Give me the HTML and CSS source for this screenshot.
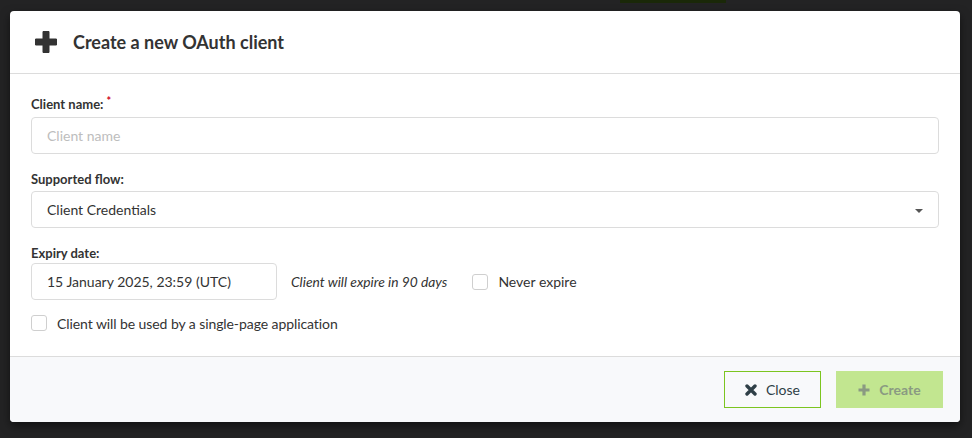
FILE: index.html
```html
<!DOCTYPE html>
<html>
<head>
<meta charset="utf-8">
<link rel="stylesheet" href="styles.css">
</head>
<body>
<div class="backdrop-bar"></div>
<div class="modal">
  <div class="modal-header">
    <svg class="plus-icon" width="24" height="24" viewBox="0 0 24 24"><path d="M9 1.5h6v7.5h7.5v6h-7.5v7.5h-6v-7.5h-7.5v-6h7.5z" fill="#333" stroke="#333" stroke-width="1" stroke-linejoin="round"/></svg>
    <h1 class="title">Create a new OAuth client</h1>
  </div>
  <div class="modal-body">
    <div class="group">
      <label class="label">Client name:<span class="req">*</span></label>
      <div class="field placeholder">Client name</div>
    </div>
    <div class="group group-flow">
      <label class="label">Supported flow:</label>
      <div class="field select">Client Credentials<span class="caret"></span></div>
    </div>
    <div class="group group-expiry">
      <label class="label">Expiry date:</label>
      <div class="expiry-row">
        <div class="field date">15 January 2025, 23:59 (UTC)</div>
        <span class="hint">Client will expire in 90 days</span>
        <span class="check"><span class="box"></span>Never expire</span>
      </div>
    </div>
    <div class="check spa"><span class="box"></span>Client will be used by a single-page application</div>
  </div>
  <div class="modal-footer">
    <button class="btn btn-close"><svg width="12" height="12" viewBox="0 0 12 12"><path d="M2 2L10 10M10 2L2 10" stroke="#2f3f47" stroke-width="3.4" stroke-linecap="round"/></svg>Close</button>
    <button class="btn btn-create"><svg width="12" height="12" viewBox="0 0 12 12"><path d="M6 0.5V11.5M0.5 6H11.5" stroke="#8a9a82" stroke-width="3.2"/></svg>Create</button>
  </div>
</div>
</body>
</html>
```
FILE: styles.css
```css
* { box-sizing: border-box; }
html, body { margin: 0; padding: 0; }
body {
  background: #232324;
  font-family: Lato, "Open Sans", sans-serif;
  color: #333;
  width: 972px;
  height: 438px;
  overflow: hidden;
  position: relative;
}
.backdrop-bar {
  position: absolute;
  left: 620px;
  top: 0;
  width: 106px;
  height: 3px;
  background: #1a2808;
}
.modal {
  position: relative;
  margin: 11px 0 0 10px;
  width: 950px;
  background: #fff;
  border-radius: 4px;
  box-shadow: 0 4px 10px rgba(0,0,0,0.5);
  overflow: hidden;
}
.modal-header {
  height: 63px;
  display: flex;
  align-items: center;
  padding-left: 24px;
  border-bottom: 1px solid #dcdcdc;
}
.title {
  margin: 0 0 0 15px;
  font-size: 18px;
  font-weight: 700;
  color: #333;
}
.modal-body {
  padding: 21px 21px 25px 21px;
}
.group { margin-bottom: 16px; }
.group-flow .label { margin-bottom: 3px; }
.group-expiry { margin-bottom: 15px; }
.group-expiry .label { margin-bottom: 1px; }
.label {
  display: block;
  font-size: 13px;
  font-weight: 700;
  line-height: 18px;
  margin-bottom: 4px;
}
.req { color: #d0021b; font-size: 11px; vertical-align: top; position: relative; top: -3px; margin-left: 3px; }
.field {
  height: 37px;
  border: 1px solid #dcdcdc;
  border-radius: 4px;
  padding: 0 15px;
  display: flex;
  align-items: center;
  font-size: 14px;
  color: #333;
}
.placeholder { color: #bdbdbd; }
.select { position: relative; }
.caret {
  position: absolute;
  right: 15px;
  top: 17px;
  width: 0;
  height: 0;
  border-left: 4px solid transparent;
  border-right: 4px solid transparent;
  border-top: 4px solid #555;
}
.expiry-row {
  display: flex;
  align-items: center;
}
.date { width: 246px; height: 37px; }
.hint {
  font-style: italic;
  font-size: 13.8px;
  margin-left: 14px;
  margin-right: 25px;
}
.check {
  display: flex;
  align-items: center;
  font-size: 14px;
}
.box {
  width: 16px;
  height: 16px;
  border: 1px solid #cfcfcf;
  border-radius: 3px;
  margin-right: 10px;
  background: #fff;
}
.spa { height: 16px; letter-spacing: -0.08px; }
.modal-footer {
  border-top: 1px solid #dcdcdc;
  background: #f8f9fb;
  height: 66px;
  display: flex;
  justify-content: flex-end;
  align-items: center;
  padding-right: 17px;
  gap: 15px;
}
.btn {
  height: 37px;
  font-family: Lato, "Open Sans", sans-serif;
  font-size: 14px;
  display: flex;
  align-items: center;
  justify-content: center;
  gap: 9px;
  border-radius: 0;
  cursor: pointer;
}
.btn-close {
  width: 97px;
  background: #f8f9fb;
  border: 1px solid #7cc520;
  color: #2f3f47;
}
.btn-create {
  width: 107px;
  background: #c2e690;
  border: none;
  color: #8a9a82;
  font-weight: 700;
}
```
